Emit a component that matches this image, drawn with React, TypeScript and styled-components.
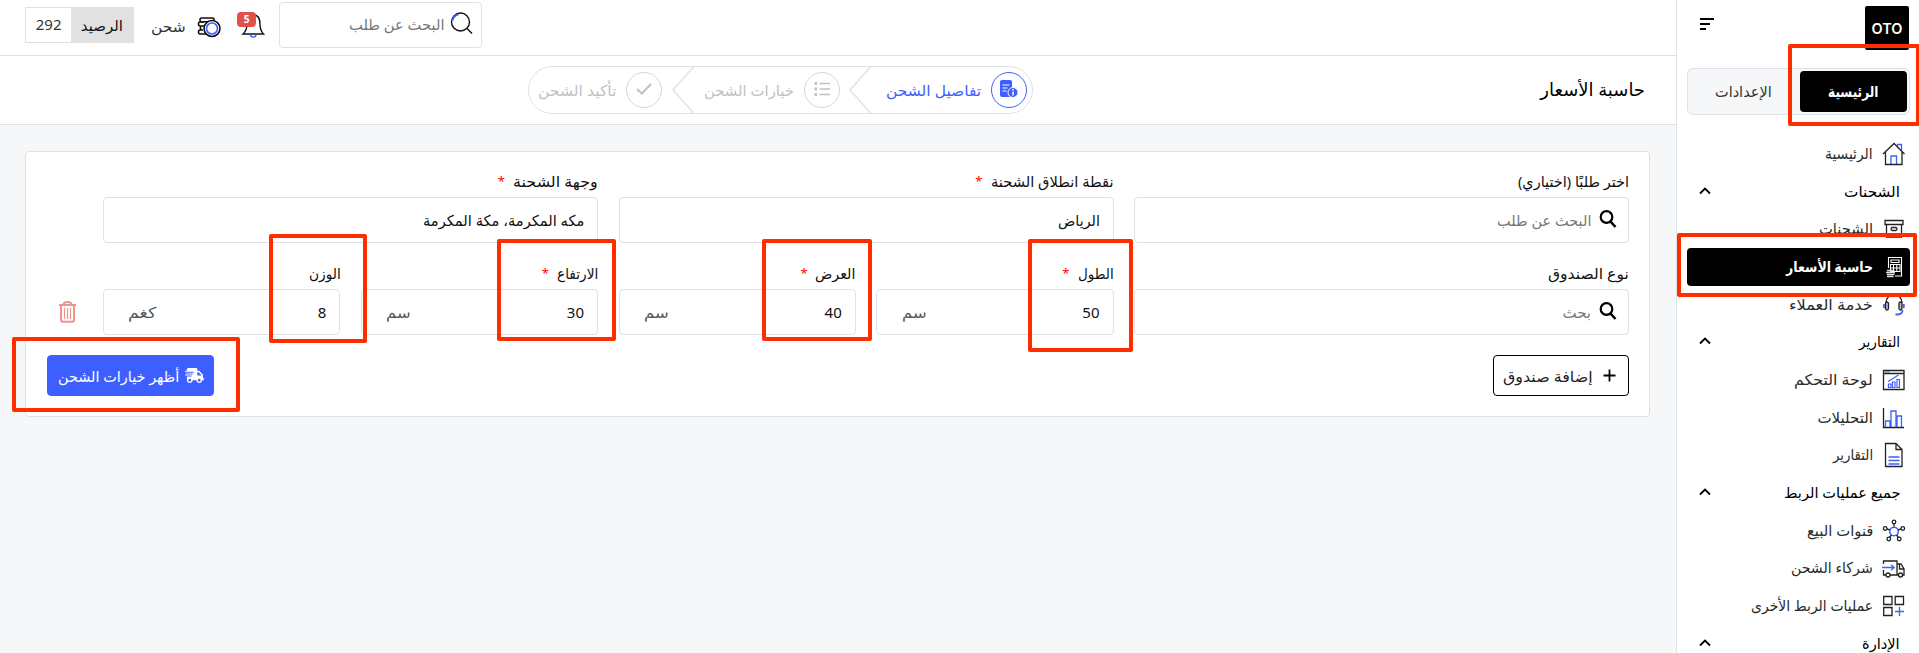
import React, { useLayoutEffect, useRef, useState } from 'react';
import { createGlobalStyle, styled } from 'styled-components';
import { FaShippingFast } from 'react-icons/fa';

const BLUE = '#3d5fff';
const LINE = '#dee2e6';
const MARK_RED = '#ff2e00';

const GlobalStyle = createGlobalStyle`
    *, *::before, *::after { box-sizing: border-box; }
    body {
        margin: 0;
        overflow: hidden;
        background: #f5f7f9;
        color: #111;
        font-family: "Noto Sans", "DejaVu Sans", sans-serif;
        font-size: 15px;
    }
`;

const Page = styled.div`
    position: relative;
    display: flex;
    height: 653px;
    overflow: hidden;
`;

/* ---------- text ---------- */

const TextBox = styled.span<{ $width: number }>`
    display: block;
    flex: none;
    width: ${p => p.$width}px;
    white-space: nowrap;
    line-height: 24px;
`;

const TextInner = styled.span`
    display: inline-block;
    transform-origin: right center;
`;

type TextProps = { w: number; children: React.ReactNode; className?: string };

// Keeps a label at its designed width whichever Arabic fallback font is used.
function Text({ w, children, className }: TextProps) {
    const ref = useRef<HTMLSpanElement>(null);
    const [scale, setScale] = useState(1);

    useLayoutEffect(() => {
        if (ref.current) setScale(w / ref.current.offsetWidth);
    }, [w, children]);

    return (
        <TextBox $width={w} className={className}>
            <TextInner ref={ref} style={{ transform: `scaleX(${scale})` }}>{children}</TextInner>
        </TextBox>
    );
}

/* ---------- sidebar ---------- */

const Sidebar = styled.aside`
    flex: none;
    width: 243px;
    height: 100%;
    background: #fff;
    border-left: 1px solid ${LINE};
`;

const SidebarTop = styled.div`
    display: flex;
    justify-content: space-between;
    padding: 6px 10px 0 23px;
    height: 68px;
`;

const Logo = styled.div`
    display: flex;
    align-items: center;
    justify-content: center;
    width: 44px;
    height: 44px;
    background: #000;
    border-radius: 2px;
    color: #fff;
    font: 600 14.5px "Inter", sans-serif;
`;

const MenuLines = styled.div`
    display: flex;
    flex-direction: column;
    align-items: flex-end;
    gap: 3px;
    padding-top: 12px;
`;

const MenuLine = styled.span<{ $width: number }>`
    width: ${p => p.$width}px;
    height: 2px;
    background: #000;
`;

const Tabs = styled.div`
    display: flex;
    width: 223px;
    height: 47px;
    margin: 0 9px 20px 0;
    padding: 2px;
    background: #f5f7f9;
    border: 1px solid ${LINE};
    border-radius: 6px;
`;

const Tab = styled.div<{ $active?: boolean }>`
    display: flex;
    align-items: center;
    justify-content: center;
    width: ${p => (p.$active ? 107 : 114)}px;
    flex: none;
    padding-bottom: 2px;
    border-radius: 4px;
    background: ${p => (p.$active ? '#000' : 'transparent')};
    color: ${p => (p.$active ? '#fff' : '#333')};
    font-weight: ${p => (p.$active ? 600 : 400)};
`;

const MenuItem = styled.div<{ $active?: boolean }>`
    display: flex;
    align-items: center;
    gap: 9px;
    width: 223px;
    height: 37.7px;
    margin-right: 9px;
    padding-right: 4px;
    border-radius: 4px;
    background: ${p => (p.$active ? '#000' : 'transparent')};
    color: ${p => (p.$active ? '#fff' : '#2b2b2b')};
    font-weight: ${p => (p.$active ? 600 : 400)};

    svg { flex: none; }
    span { padding-bottom: 1px; }
`;

const MenuHeader = styled.div`
    display: flex;
    align-items: center;
    justify-content: space-between;
    height: 37.7px;
    padding: 0 19px 2px 22px;
    color: #000;
    font-weight: 500;
`;

const iconProps = { width: 24, height: 26, viewBox: '0 0 24 26', fill: 'none', stroke: '#222', strokeWidth: 1.3 };

const HomeIcon = () => (
    <svg {...iconProps}>
        <path d="M15.500 5V3.500h4V9" stroke={BLUE} />
        <path d="M9 23.500V15h5.500v8.500" stroke={BLUE} />
        <path d="M1 13 12 2.500 22.500 13M3.500 11v12.500h16.500V11" />
    </svg>
);
const BoxIcon = () => (
    <svg {...iconProps}>
        <path d="M3 4.500h18v4H3zM4.500 8.500V21h15V8.500" />
        <rect x="9" y="11.500" width="6" height="3" rx="1.500" />
        <path d="M15.500 18h2" stroke={BLUE} />
    </svg>
);
const CalcIcon = () => (
    <svg {...iconProps} stroke="#fff" strokeWidth={1.1}>
        <path d="M6.500 14V3.500h13V22H13" />
        <path d="M9 6h8v2.500H9z" />
        <path d="M8.500 10.500h9.500v7H8.500zM8.500 14h9.500M11.500 10.500v7M14.800 10.500v7" />
        <path d="M5 16.500h7.500M4 18.500h9M5 20.500h7.500M5 22.500h6.500" stroke="#ddd" strokeWidth="1.300" />
    </svg>
);
const HeadsetIcon = () => (
    <svg {...iconProps}>
        <path d="M4 11C4 0 20 0 20 11" />
        <rect x="3.500" y="10" width="3" height="8" rx="1.500" fill="#bbb" />
        <rect x="17" y="10" width="3" height="8" rx="1.500" fill="#bbb" />
        <path d="M2 12v4M21.800 12v4M20.500 18c0 3-2 4.500-5 4.500h-2" stroke={BLUE} strokeWidth="1.800" />
    </svg>
);
const DashboardIcon = () => (
    <svg {...iconProps}>
        <path d="M1.500 3.500h20.500v19H1.500zM1.500 6.500H22" />
        <path d="M3 5h5M6.500 20.500v-3.500h2.500v3.500zM10.500 20.500v-5.500h2.500v5.500zM15 20.500v-8h2.500v8zM6 14.500l5-3 5.500-3.500" stroke={BLUE} strokeWidth="1.200" />
    </svg>
);
const BarsIcon = () => (
    <svg {...iconProps}>
        <path d="M1.500 3v19.500H22" />
        <path d="M3.500 22v-6H8v6M9 22V6h5v16M15 22V11h4.500v11" stroke={BLUE} />
    </svg>
);
const DocIcon = () => (
    <svg {...iconProps}>
        <path d="M3.500 1.500h10.500l6 6v17h-16.500zM14 1.500v6h6" />
        <path d="M6.500 15h11M6.500 18.500h11M6.500 22h11" stroke={BLUE} />
    </svg>
);
const NetworkIcon = () => (
    <svg {...iconProps}>
        <circle cx="12" cy="13.500" r="4.300" stroke={BLUE} strokeWidth="1.600" />
        <path d="M12 8.500V6M16 11.800l3-.8M8 11.800l-3-.8M9.500 17l-2 2.500M14.500 17l2 2.500" />
        <circle cx="12" cy="4" r="1.800" /><circle cx="3.200" cy="10.500" r="1.800" /><circle cx="20.800" cy="10.500" r="1.800" />
        <circle cx="6.800" cy="21" r="1.800" /><circle cx="17.200" cy="21" r="1.800" />
    </svg>
);
const TruckIcon = () => (
    <svg {...iconProps}>
        <path d="M1.500 9V6h13.500v14H8M4 20H1.500v-5M15 9h4l3 5v6h-2M15 20h1.500M17.500 9v5h4.500" />
        <circle cx="6" cy="20" r="2" /><circle cx="18.500" cy="20" r="2" />
        <path d="M0 12.500h12M9 9.800l3.200 2.700L9 15.200" stroke={BLUE} />
    </svg>
);
const AppsIcon = () => (
    <svg {...iconProps}>
        <path d="M1.700 3.500h8.300v8H1.700zM13.200 3.500h8.300v8h-8.300zM1.700 14.500h8.300v8H1.700z" />
        <path d="M17.500 14v9M13 18.500h9" stroke={BLUE} />
    </svg>
);

const Chevron = () => (
    <svg width="12" height="8" viewBox="0 0 12 8" fill="none" stroke="#000" strokeWidth="1.800">
        <path d="M1 6.500 6 1.500l5 5" />
    </svg>
);

type Entry = { text: string; w: number; Icon?: () => React.ReactElement; active?: boolean };

const menu: Entry[] = [
    { text: 'الرئيسية', w: 48, Icon: HomeIcon },
    { text: 'الشحنات', w: 56 },
    { text: 'الشحنات', w: 54, Icon: BoxIcon },
    { text: 'حاسبة الأسعار', w: 87, Icon: CalcIcon, active: true },
    { text: 'خدمة العملاء', w: 84, Icon: HeadsetIcon },
    { text: 'التقارير', w: 41 },
    { text: 'لوحة التحكم', w: 79, Icon: DashboardIcon },
    { text: 'التحليلات', w: 56, Icon: BarsIcon },
    { text: 'التقارير', w: 40, Icon: DocIcon },
    { text: 'جميع عمليات الربط', w: 117 },
    { text: 'قنوات البيع', w: 66, Icon: NetworkIcon },
    { text: 'شركاء الشحن', w: 82, Icon: TruckIcon },
    { text: 'عمليات الربط الأخرى', w: 122, Icon: AppsIcon },
    { text: 'الإدارة', w: 38 },
];

/* ---------- header ---------- */

const Main = styled.main`
    flex: 1;
    min-width: 0;
`;

const TopBar = styled.header`
    display: flex;
    align-items: flex-start;
    justify-content: flex-end;
    height: 56px;
    padding: 2px 0 0 25px;
    background: #fff;
    border-bottom: 1px solid ${LINE};
`;

const TopSearch = styled.div`
    display: flex;
    align-items: center;
    gap: 6px;
    width: 203px;
    height: 46px;
    padding: 0 8px 2px 0;
    border: 1px solid ${LINE};
    border-radius: 4px;
    color: #777;
`;

const Bell = styled.div`
    position: relative;
    width: 24px;
    height: 26px;
    margin: 10px 14px 0 0;
`;

const Badge = styled.span`
    position: absolute;
    left: -4px;
    top: 0;
    width: 19px;
    height: 15px;
    border-radius: 4px;
    background: #e2504a;
    color: #fff;
    font-size: 10px;
    font-weight: 700;
    line-height: 14px;
    text-align: center;
`;

const Coins = styled.div`
    display: flex;
    gap: 11px;
    margin: 12px 20px 0 17px;
    color: #333;

    svg { margin-top: 1px; }
`;

const Balance = styled.div`
    display: flex;
    width: 109px;
    height: 36px;
    margin-top: 5px;
    border: 1px solid #e1e1e1;
`;

const BalanceName = styled.div`
    display: flex;
    align-items: center;
    justify-content: center;
    width: 62px;
    background: #e1e1e1;
`;

const BalanceValue = styled.div`
    display: flex;
    align-items: center;
    justify-content: center;
    flex: 1;
    padding-bottom: 2px;
    color: #333;
`;

/* ---------- title and steps ---------- */

const TitleBar = styled.div`
    display: flex;
    align-items: flex-start;
    height: 69px;
    padding: 10px 31px 0 0;
    background: #fff;
    border-bottom: 1px solid ${LINE};
`;

const Title = styled.h1`
    width: 612px;
    margin: 11px 0 0;
    font-size: 18px;
    font-weight: 400;
    color: #000;
`;

const Steps = styled.div`
    display: flex;
    align-items: center;
    width: 505px;
    height: 48px;
    padding-right: 5px;
    border: 1px solid ${LINE};
    border-radius: 24px;
`;

const Step = styled.div<{ $active?: boolean }>`
    display: flex;
    align-items: center;
    gap: 10px;
    color: ${p => (p.$active ? BLUE : '#bfc1c3')};
`;

const StepCircle = styled.div<{ $active?: boolean }>`
    display: flex;
    align-items: center;
    justify-content: center;
    width: 36px;
    height: 36px;
    padding-bottom: 2px;
    border: 1px solid ${p => (p.$active ? BLUE : '#d5d7d9')};
    border-radius: 50%;
`;

const StepArrow = styled.svg<{ $before: number; $after: number }>`
    flex: none;
    margin: 0 ${p => p.$before}px 0 ${p => p.$after}px;
`;

const Arrow = ({ before, after }: { before: number; after: number }) => (
    <StepArrow $before={before} $after={after} width="22" height="46" fill="none" stroke={LINE} strokeWidth="1.400">
        <path d="M21.500 0 1 23l20.500 23" />
    </StepArrow>
);

/* ---------- form ---------- */

const Card = styled.section`
    width: 1625px;
    height: 266px;
    margin: 26px 26px 0 0;
    padding: 17px 20px 20px;
    background: #fff;
    border: 1px solid ${LINE};
    border-radius: 4px;
`;

const FormRow = styled.div`
    display: flex;
    align-items: flex-end;
`;

const FormGrid = styled.div`
    display: grid;
    grid-template-columns: repeat(6, 1fr);
    gap: 18px 20.5px;
    width: 1526px;
`;

const FieldBox = styled.div<{ $span: number }>`
    grid-column: span ${p => p.$span};
`;

const FieldLabel = styled.div`
    display: flex;
    gap: 8px;
    height: 28px;
`;

const Star = styled.span`
    color: #f00;
    font-size: 13px;
    line-height: 24px;
`;

const Input = styled.div<{ $search?: boolean }>`
    display: flex;
    align-items: center;
    gap: 8px;
    height: 46px;
    padding: 0 ${p => (p.$search ? 11 : 13)}px 0 24px;
    border: 1px solid ${LINE};
    border-radius: 4px;
    color: ${p => (p.$search ? '#777' : '#111')};

    svg { margin-bottom: 2px; }
`;

const Unit = styled.div`
    margin-right: auto;
    color: #555;
    font-weight: 500;
`;

const Actions = styled.div`
    display: flex;
    justify-content: space-between;
    margin-top: 20px;
    padding-left: 1px;
`;

const Button = styled.button<{ $primary?: boolean }>`
    display: flex;
    align-items: center;
    gap: ${p => (p.$primary ? 6 : 8)}px;
    width: ${p => (p.$primary ? 167 : 136)}px;
    height: 41px;
    padding: 0 ${p => (p.$primary ? 9 : 12)}px 0 0;
    border: 1px solid ${p => (p.$primary ? BLUE : '#000')};
    border-radius: 4px;
    background: ${p => (p.$primary ? BLUE : '#fff')};
    color: ${p => (p.$primary ? '#fff' : '#222')};
    font: inherit;

    svg { margin-bottom: 1px; }
`;

const TrashCell = styled.div`
    display: flex;
    align-items: center;
    height: 46px;
    margin-right: 27px;
`;

const SearchIcon = () => (
    <svg width="18" height="18" viewBox="0 0 18 18" fill="none" stroke="#000" strokeWidth="2.200">
        <circle cx="7.500" cy="7" r="5.800" />
        <path d="m11.500 11.500 5 5.500" strokeWidth="2.600" />
    </svg>
);

type FieldProps = {
    label: string;
    labelWidth: number;
    value: string;
    valueWidth: number;
    span?: number;
    required?: boolean;
    search?: boolean;
    unit?: string;
    unitWidth?: number;
};

function Field({ label, labelWidth, value, valueWidth, span = 1, required, search, unit, unitWidth = 25 }: FieldProps) {
    return (
        <FieldBox $span={span}>
            <FieldLabel>
                <Text w={labelWidth}>{label}</Text>
                {required && <Star>*</Star>}
            </FieldLabel>
            <Input $search={search}>
                {search && <SearchIcon />}
                <Text w={valueWidth}>{value}</Text>
                {unit && <Unit><Text w={unitWidth}>{unit}</Text></Unit>}
            </Input>
        </FieldBox>
    );
}

// Red frame drawn over the page around a part the reader should look at
const Mark = styled.div<{ $x: number; $y: number; $w: number; $h: number }>`
    position: absolute;
    left: ${p => p.$x}px;
    top: ${p => p.$y}px;
    width: ${p => p.$w}px;
    height: ${p => p.$h}px;
    border: 4px solid ${MARK_RED};
    border-radius: 2px;
`;

export default function App() {
    return (
        <Page dir="rtl">
            <GlobalStyle />
            <Sidebar>
                <SidebarTop>
                    <Logo>OTO</Logo>
                    <MenuLines>
                        <MenuLine $width={14} />
                        <MenuLine $width={10} />
                        <MenuLine $width={6} />
                    </MenuLines>
                </SidebarTop>
                <Tabs>
                    <Tab $active><Text w={50}>الرئيسية</Text></Tab>
                    <Tab><Text w={57}>الإعدادات</Text></Tab>
                </Tabs>
                {menu.map(({ text, w, Icon, active }, i) => Icon ? (
                    <MenuItem key={i} $active={active}>
                        <Icon />
                        <Text w={w}>{text}</Text>
                    </MenuItem>
                ) : (
                    <MenuHeader key={i}>
                        <Text w={w}>{text}</Text>
                        <Chevron />
                    </MenuHeader>
                ))}
            </Sidebar>

            <Main>
                <TopBar>
                    <TopSearch>
                        <svg width="23" height="24" viewBox="0 0 23 24" fill="none" stroke="#111" strokeWidth="1.400">
                            <circle cx="10.500" cy="10" r="9" />
                            <path d="m17 16.500 5 5" />
                            <path d="M2.500 8.500C3.200 5 5.500 3 8.500 2.300" stroke={BLUE} strokeWidth="1.800" />
                        </svg>
                        <Text w={95}>البحث عن طلب</Text>
                    </TopSearch>
                    <Bell>
                        <svg width="24" height="26" viewBox="0 0 24 26" fill="none" stroke="#111" strokeWidth="1.400">
                            <path d="M2 22h20.500c-3-3-3.500-5-3.500-10C19 6 16.500 3 12.500 3S6 6 6 11.500c0 5-.5 7.500-4 10.500z" />
                            <path d="M9.500 22.500c0 3.500 5.500 3.500 5.500 0" stroke={BLUE} />
                        </svg>
                        <Badge>5</Badge>
                    </Bell>
                    <Coins>
                        <svg width="24" height="24" viewBox="0 0 24 24" fill="none" stroke="#111" strokeWidth="1.600">
                            <rect x="3" y="3" width="14" height="3.800" rx="1.500" />
                            <path d="M7 7H3c-2 0-2 4 0 4h3M7 11H3.500v4H6M6 15H3c-2 0-2 4 0 4h7M8 19H2" />
                            <circle cx="15" cy="13.500" r="8" fill="#fff" />
                            <circle cx="15" cy="13.500" r="5.500" stroke={BLUE} />
                        </svg>
                        <Text w={35}>شحن</Text>
                    </Coins>
                    <Balance>
                        <BalanceName><Text w={42}>الرصيد</Text></BalanceName>
                        <BalanceValue><Text w={26}>292</Text></BalanceValue>
                    </Balance>
                </TopBar>

                <TitleBar>
                    <Title><Text w={105}>حاسبة الأسعار</Text></Title>
                    <Steps>
                        <Step $active>
                            <StepCircle $active>
                                <svg width="18" height="18" viewBox="0 0 18 18" fill={BLUE}>
                                    <rect width="12" height="17" rx="2" />
                                    <path d="M2.500 5h7M2.500 8h5M2.500 11h4" stroke="#fff" strokeWidth="1.200" />
                                    <circle cx="13" cy="12.500" r="5" stroke="#fff" />
                                    <path d="M13 11.500v4M13 9v1.400" stroke="#fff" strokeWidth="1.500" />
                                </svg>
                            </StepCircle>
                            <Text w={95}>تفاصيل الشحن</Text>
                        </Step>
                        <Arrow before={15} after={9} />
                        <Step>
                            <StepCircle>
                                <svg width="16" height="16" viewBox="0 0 16 16" stroke="#bfc1c3" fill="#bfc1c3">
                                    <path d="M5.500 2.500H16M5.500 8H16M5.500 13.500H16" strokeWidth="1.600" />
                                    <path d="M.5 2.500H3M.5 8H3M.5 13.500H3" strokeWidth="2.800" />
                                </svg>
                            </StepCircle>
                            <Text w={90}>خيارات الشحن</Text>
                        </Step>
                        <Arrow before={10} after={10} />
                        <Step>
                            <StepCircle>
                                <svg width="16" height="12" viewBox="0 0 16 12" fill="none" stroke="#bfc1c3" strokeWidth="2">
                                    <path d="m1 6 4.800 4.500L15 1" />
                                </svg>
                            </StepCircle>
                            <Text w={78}>تأكيد الشحن</Text>
                        </Step>
                    </Steps>
                </TitleBar>

                <Card>
                    <FormRow>
                        <FormGrid>
                            <Field span={2} search label="اختر طلبًا (اختياري)" labelWidth={111} value="البحث عن طلب" valueWidth={94} />
                            <Field span={2} required label="نقطة انطلاق الشحنة" labelWidth={123} value="الرياض" valueWidth={42} />
                            <Field span={2} required label="وجهة الشحنة" labelWidth={85} value="مكه المكرمة، مكة المكرمة" valueWidth={161} />
                            <Field span={2} search label="نوع الصندوق" labelWidth={81} value="بحث" valueWidth={29} />
                            <Field required label="الطول" labelWidth={36} value="50" valueWidth={17} unit="سم" />
                            <Field required label="العرض" labelWidth={40} value="40" valueWidth={17} unit="سم" />
                            <Field required label="الارتفاع" labelWidth={41} value="30" valueWidth={17} unit="سم" />
                            <Field label="الوزن" labelWidth={32} value="8" valueWidth={9} unit="كغم" unitWidth={28} />
                        </FormGrid>
                        <TrashCell>
                            <svg width="17" height="22" viewBox="0 0 17 22" fill="none" stroke="#ee9490" strokeWidth="2">
                                <path d="M0 4h17M4.500 4c0-4 8-4 8 0" />
                                <path d="M2 4v14.500c0 1.500.8 2.300 2 2.300h9c1.200 0 2-.8 2-2.300V4" />
                                <path d="M5.500 7v11M8.500 7v11M11.500 7v11" strokeWidth="1.200" />
                            </svg>
                        </TrashCell>
                    </FormRow>
                    <Actions>
                        <Button>
                            <svg width="13" height="13" viewBox="0 0 13 13" stroke="#000" strokeWidth="1.800">
                                <path d="M6.500 .5v12M.5 6.500h12" />
                            </svg>
                            <Text w={90}>إضافة صندوق</Text>
                        </Button>
                        <Button $primary>
                            <FaShippingFast size={19} />
                            <Text w={121}>أظهر خيارات الشحن</Text>
                        </Button>
                    </Actions>
                </Card>
            </Main>

            <Mark $x={1788} $y={44} $w={132} $h={82} />
            <Mark $x={1677} $y={233} $w={240} $h={64} />
            <Mark $x={1028} $y={239} $w={105} $h={113} />
            <Mark $x={762} $y={239} $w={110} $h={102} />
            <Mark $x={497} $y={239} $w={119} $h={102} />
            <Mark $x={269} $y={234} $w={98} $h={109} />
            <Mark $x={12} $y={337} $w={228} $h={75} />
        </Page>
    );
}
